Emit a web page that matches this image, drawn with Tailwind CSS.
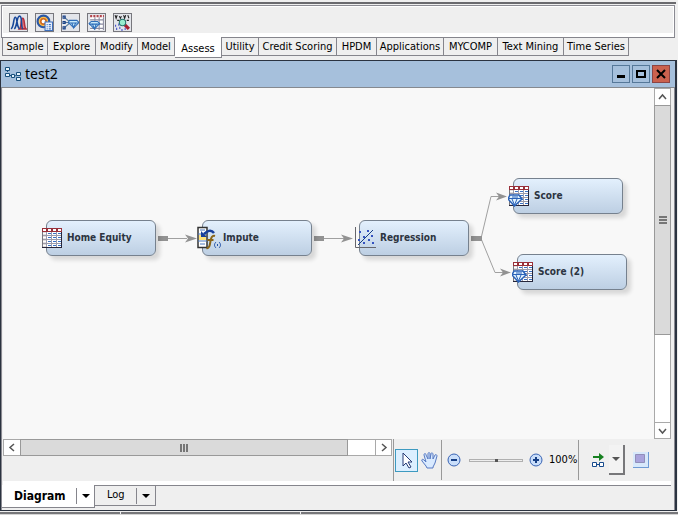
<!DOCTYPE html>
<html lang="en">
<head>
  <meta charset="UTF-8">
  <meta name="viewport" content="width=device-width, initial-scale=1.0">
  <title>test2</title>
  <script src="https://cdn.jsdelivr.net/npm/@tailwindcss/browser@4"></script>
</head>
<body class="flex min-h-screen flex-col bg-[#efefef] font-['DejaVu_Sans_Condensed','DejaVu_Sans',sans-serif] text-xs text-black">

  <!-- shared icons -->
  <svg class="hidden" aria-hidden="true">
    <symbol id="table" viewBox="0 0 22 22">
      <path d="M1 1h20v20H1z" fill="#fff"/>
      <path d="M1 5h5v16H1z" fill="#c4bcbc"/>
      <path d="M1 1h20v4H1z" fill="#98303a"/>
      <path d="M2 3h3M7 3h3M12 3h3M17 3h3" stroke="#fff" stroke-width="2"/>
      <path d="M5.500 5v15M10.500 5v15M15.500 5v15M1 8.500h19M1 12.500h19M1 16.500h19" stroke="#9c9cab"/>
      <path d="M2 6.500h3M2 10.500h3M2 14.500h3M2 18.500h3" stroke="#fff" stroke-width="2"/>
      <path d="M7 6.500h3M12 6.500h3M17 6.500h3M7 10.500h3M12 10.500h3M17 10.500h3M7 14.500h3M12 14.500h3M17 14.500h3M7 18.500h3M12 18.500h3M17 18.500h3" stroke="#3a72c4"/>
      <path d="M1.500 5v16" stroke="#77777d"/>
      <path d="M1 20.500h20M20.500 5v16" stroke="#25253a"/>
    </symbol>
    <symbol id="score" viewBox="0 0 22 22">
      <use href="#table" width="22" height="22"/>
      <path d="M2 10h9l3 4-7.500 7L0 14z" fill="#e4f4ff" stroke="#2a62b8" stroke-width="1.500"/>
      <path d="M1 13.500h12M4 14l2.500 6L9 14M4 12h6" stroke="#2a62b8" fill="none"/>
    </symbol>
  </svg>

  <!-- component toolbar -->
  <header class="pr-[2px]">
    <div class="mt-[2px] h-[2px] bg-[#6a6a6e]"></div>
    <div class="mx-px mt-px flex h-8 gap-[7px] border border-b-0 border-[#8a8a92] pt-[7px] pl-[7px] shadow-[inset_1px_1px_0_#fff,inset_-1px_-4px_0_#fff]">
      <button aria-label="Model comparison" class="size-[19px] border border-[#77777d] bg-[#e3e5ea]">
        <svg viewBox="0 0 16 16" class="size-[17px]" fill="none" stroke-width="1.500"><path d="M9 14c2-2 1-10 3-10s1 8 3 10z" fill="#e77" stroke="#b03040"/><path d="M1 14C4 12 3 3 5 3s1 9 4 11M4 14C7 12 6 2 9 2s1 10 3 12" stroke="#17479a"/></svg>
      </button>
      <button aria-label="Cutoff" class="size-[19px] border border-[#77777d] bg-[#e3e5ea]">
        <svg viewBox="0 0 16 16" class="size-[17px]"><circle cx="7" cy="7" r="5.500" fill="#ffc14a" stroke="#2b58a4" stroke-width="2"/><circle cx="7" cy="7" r="2.500" fill="#fff" stroke="#d26a20" stroke-width="1.500"/><path d="M8.500 7.500h7v8h-7z" fill="#eef5ff" stroke="#3e70bd"/><path d="M10 10h1m1 0h2m-4 2h1m1 0h2m-4 2h1m1 0h2" stroke="#3e70bd"/></svg>
      </button>
      <button aria-label="Decisions" class="size-[19px] border border-[#77777d] bg-[#e3e5ea]">
        <svg viewBox="0 0 16 16" class="size-[17px]" fill="none"><path d="M2 3l6 5-6 5M2 8h7" stroke="#58789c"/><path d="M1 2h2v2H1zM1 7h2v2H1zM1 12h2v2H1z" stroke="#173f86"/><path d="M7 6h7l2 2-5 5-5-5z" fill="#c8e9fa" stroke="#2f6eb8"/><path d="M6 8.500h9M9 8l2 5 2-5" stroke="#2f6eb8"/></svg>
      </button>
      <button aria-label="Score" class="size-[19px] border border-[#77777d] bg-[#e3e5ea]">
        <svg viewBox="0 0 16 16" class="size-[17px]" fill="none"><path d="M2 1h13v14H2z" fill="#fff"/><path d="M2 2h13" stroke="#b0444c" stroke-width="2" stroke-dasharray="2 1"/><path d="M2 5.500h13M2 9.500h13M2 13.500h13M6.500 3v12M10.500 3v12M14.500 3v12" stroke="#8c8ca0"/><path d="M3 7h6l2 2-5 5-5-5z" fill="#c8e9fa" stroke="#2f6eb8"/><path d="M1 9.500h10M4 9l2 5 2-5" stroke="#2f6eb8"/></svg>
      </button>
      <button aria-label="Segment profile" class="size-[19px] border border-[#77777d] bg-[#e3e5ea]">
        <svg viewBox="0 0 16 16" class="size-[17px]" fill="none"><path d="M1 1l1 3 1-3M5 2l1 2 1-2M9 1l1 3 1-3M13 1l1 3M3 6h2M12 6h2" stroke="#222"/><path d="M1 11h1m2-1h1m-3 4h1m2-1h1m1 2h1m2-1h1" stroke="#4350c8" stroke-width="2"/><path d="M10 10l4 4" stroke="#a51f30" stroke-width="3"/><circle cx="8" cy="8" r="3" fill="#97edce" stroke="#28736c"/></svg>
      </button>
    </div>
    <nav class="mx-px flex h-[23px] items-start border-t border-[#85858c] pl-[2px] text-[11px] *:h-[18px] *:border-r *:border-b *:border-[#85858c] *:text-center *:leading-[17px] *:whitespace-nowrap">
      <a href="#" class="w-[45px] shadow-[-1px_0_0_#85858c]">Sample</a>
      <a href="#" class="w-12">Explore</a>
      <a href="#" class="w-[42px]">Modify</a>
      <a href="#" class="w-[37px]">Model</a>
      <a href="#" class="z-10 -mt-px h-[21px]! w-[47px] bg-white leading-6!">Assess</a>
      <a href="#" class="w-[37px]">Utility</a>
      <a href="#" class="w-[78px]">Credit Scoring</a>
      <a href="#" class="w-10">HPDM</a>
      <a href="#" class="w-[67px]">Applications</a>
      <a href="#" class="w-[54px]">MYCOMP</a>
      <a href="#" class="w-[66px]">Text Mining</a>
      <a href="#" class="w-[65px]">Time Series</a>
    </nav>
  </header>

  <!-- diagram window -->
  <main class="mr-px flex flex-1 flex-col border border-r-2 border-[#2b3340]">
    <div class="flex h-[27px] items-center gap-1 border-b border-[#85898f] bg-[#a6c0dc] pr-[5px] pl-1">
      <svg viewBox="0 0 16 16" class="size-4" fill="none" stroke="#174f7c"><path d="M2.500 5v3M5 9.500h3M10 9l2 3" stroke-dasharray="1 1"/><path d="M.5 1.500h4v3h-4zM.5 7.500h4v3h-4zM6.500 8.500h3v3h-3zM11.500 6.500h4v3h-4zM11.500 11.500h4v3h-4z" fill="#e5f2fb"/></svg>
      <h1 class="flex-1 font-['Noto_Sans',sans-serif] text-sm">test2</h1>
      <div class="flex gap-[2px]">
        <button aria-label="Minimize" class="size-[18px] border border-[#567899]"><svg viewBox="0 0 16 16" class="size-4"><path d="M4 9h8v3H4z"/></svg></button>
        <button aria-label="Maximize" class="size-[18px] border border-[#567899]"><svg viewBox="0 0 16 16" class="size-4"><path d="M4 5h8v6H4z" fill="none" stroke="#000" stroke-width="2"/></svg></button>
        <button aria-label="Close" class="size-[18px] border border-[#8c4444] bg-[#cb614e]"><svg viewBox="0 0 16 16" class="size-4"><path d="M4 4l8 8M12 4l-8 8" stroke="#000" stroke-width="2"/></svg></button>
      </div>
    </div>

    <div class="flex flex-1 flex-col border-r border-l border-[#8a8a92] pr-[3px] pl-px">
      <div class="flex flex-1">
        <!-- free canvas -->
        <section class="relative min-h-[351px] flex-1 overflow-hidden bg-[#f8f8f8] text-[10px] font-bold text-[#2c3440]">
          <svg viewBox="3 88 648 351" width="648" height="351" class="absolute top-0 left-0" fill="#929292" stroke="#a0a0a0">
            <path d="M168 238.500h19M324 238.500h20M481 238.500l10-42h8M481 238.500l14 34h8" fill="none"/>
            <path d="M158 236h10v5h-10zM314 236h10v5h-10zM471 236h11v5h-11z" stroke="none"/>
            <path d="M185 234.500l12 4-12 4 3-4zM341 234.500l12 4-12 4 3-4zM496 192.500l11 4-11 4 3-4zM500 268.500l11 4-11 4 3-4z" stroke="none"/>
          </svg>
          <div class="absolute top-[132px] left-[43px] flex h-9 w-[110px] items-center rounded-md border border-[#76818e] bg-linear-to-b from-[#e3f0fd] to-[#bdcfe3] shadow-[4px_4px_4px_#0002]">
            <svg class="-ml-[6px] size-[22px]"><use href="#table"/></svg><span class="ml-1">Home Equity</span>
          </div>
          <div class="absolute top-[132px] left-[199px] flex h-9 w-[110px] items-center rounded-md border border-[#76818e] bg-linear-to-b from-[#e3f0fd] to-[#bdcfe3] shadow-[4px_4px_4px_#0002]">
            <svg viewBox="0 0 24 24" class="-ml-[6px] size-6" fill="none"><path d="M1 1.500h9v20H1z" fill="#fff" stroke="#333" stroke-width="1.500"/><path d="M2 9h7v5H2z" fill="#ffe37b"/><path d="M1 8h9M1 15h9M3 4h5M3 18h5" stroke="#4a79bf"/><path d="M17 7C14 3 10 5 7 8" stroke="#173f9c" stroke-width="2.500"/><path d="M4 5v6h6z" fill="#173f9c"/><path d="M18 10c-3-1-4 2-4.500 5s-1 8-4 7M10.500 14h6" stroke="#8a6518" stroke-width="2"/><path d="M19 16c-2 2-2 4 0 6M22 16c2 2 2 4 0 6M20.500 18v2" stroke="#2452a8"/></svg>
            <span class="ml-[2px]">Impute</span>
          </div>
          <div class="absolute top-[132px] left-[356px] flex h-9 w-[110px] items-center rounded-md border border-[#76818e] bg-linear-to-b from-[#e3f0fd] to-[#bdcfe3] shadow-[4px_4px_4px_#0002]">
            <svg viewBox="0 0 22 22" class="-ml-[6px] size-[22px]" fill="none"><path d="M1.500 0v20.500H22" stroke="#66666c"/><path d="M4 18L19 3" stroke="#173f86"/><path d="M5 4h2v2H5zM13 3h2v2h-2zM4 12h2v2H4zM9 9h2v2H9zM17 8h2v2h-2zM14 12h2v2h-2zM9 15h2v2H9zM18 15h2v2h-2z" fill="#3452c0"/></svg>
            <span class="ml-1">Regression</span>
          </div>
          <div class="absolute top-[90px] left-[510px] flex h-9 w-[110px] items-center rounded-md border border-[#76818e] bg-linear-to-b from-[#e3f0fd] to-[#bdcfe3] shadow-[4px_4px_4px_#0002]">
            <svg class="-ml-[6px] size-[22px]"><use href="#score"/></svg><span class="ml-1">Score</span>
          </div>
          <div class="absolute top-[166px] left-[514px] flex h-9 w-[110px] items-center rounded-md border border-[#76818e] bg-linear-to-b from-[#e3f0fd] to-[#bdcfe3] shadow-[4px_4px_4px_#0002]">
            <svg class="-ml-[6px] size-[22px]"><use href="#score"/></svg><span class="ml-1">Score (2)</span>
          </div>
        </section>

        <!-- vertical scrollbar -->
        <div class="flex w-[17px] flex-col border border-[#a9a9a9] bg-white">
          <button aria-label="Scroll up" class="h-4"><svg viewBox="0 0 15 16" class="h-4 w-[15px]"><path d="M4 10l3.500-4 3.500 4" fill="none" stroke="#555" stroke-width="1.500"/></svg></button>
          <div class="-mx-px flex basis-[230px] items-center justify-center border border-[#999] bg-[#dadada]"><svg viewBox="0 0 8 8" class="size-2"><path d="M0 1h8M0 4h8M0 7h8" stroke="#555" stroke-width="1.500"/></svg></div>
          <div class="flex-1"></div>
          <button aria-label="Scroll down" class="h-4 border-t border-[#a9a9a9]"><svg viewBox="0 0 15 16" class="h-4 w-[15px]"><path d="M4 6l3.500 4 3.500-4" fill="none" stroke="#555" stroke-width="1.500"/></svg></button>
        </div>
      </div>

      <!-- horizontal scrollbar and zoom tools -->
      <div class="flex h-[46px] items-start border-b-4 border-white">
        <div class="flex h-[17px] flex-1 border border-[#a9a9a9] bg-white">
          <button aria-label="Scroll left" class="w-4"><svg viewBox="0 0 16 15" class="h-[15px] w-4"><path d="M10 4L6 7.500l4 3.500" fill="none" stroke="#555" stroke-width="1.500"/></svg></button>
          <div class="-my-px flex w-[328px] items-center justify-center border border-[#999] bg-[#dadada]"><svg viewBox="0 0 8 8" class="size-2"><path d="M1 0v8M4 0v8M7 0v8" stroke="#555" stroke-width="1.500"/></svg></div>
          <div class="flex-1"></div>
          <button aria-label="Scroll right" class="w-4 border-l border-[#a9a9a9]"><svg viewBox="0 0 16 15" class="h-[15px] w-4"><path d="M6 4l4 3.500-4 3.500" fill="none" stroke="#555" stroke-width="1.500"/></svg></button>
        </div>
        <div class="ml-px flex h-[42px] w-[278px] items-center border-l border-[#999]">
          <button aria-label="Select" class="ml-px h-[23px] w-[23px] border border-[#3d9ac0] bg-[#dcefff]"><svg viewBox="0 0 21 21" class="size-[21px]"><path d="M7 3v13l3-3 3 5 2-1-3-5h4z" fill="#fff" stroke="#263b75"/></svg></button>
          <button aria-label="Pan" class="ml-[3px] size-[18px]"><svg viewBox="0 0 18 18" class="size-[18px]"><path d="M5 15L1 10c-1-2 1-2 2-1l2 2-2-7c0-2 2-2 2 0l2 4V3c0-2 2-2 2 0v5l1-5c0-2 2-1 2 0v5l2-4c1-1 2 0 2 1l-2 7-2 4v1H6z" fill="#d9eaff" stroke="#5679c2"/></svg></button>
          <div class="ml-[2px] h-10 border-l border-[#999]"></div>
          <button aria-label="Zoom out" class="ml-[5px] size-[14px]"><svg viewBox="0 0 14 14" class="size-[14px]"><circle cx="7" cy="7" r="6" fill="#c9defa" stroke="#3863b4"/><path d="M4 7h6" stroke="#173f86" stroke-width="2"/></svg></button>
          <input type="range" value="50" aria-label="Zoom" class="ml-2 h-[3px] w-[54px] appearance-none border border-[#b0b0b0] bg-[#eee] [&::-webkit-slider-thumb]:size-[3px] [&::-webkit-slider-thumb]:appearance-none [&::-webkit-slider-thumb]:bg-[#555]">
          <button aria-label="Zoom in" class="ml-[6px] size-[14px]"><svg viewBox="0 0 14 14" class="size-[14px]"><circle cx="7" cy="7" r="6" fill="#c9defa" stroke="#3863b4"/><path d="M4 7h6M7 4v6" stroke="#173f86" stroke-width="2"/></svg></button>
          <span class="ml-[6px] w-[29px] text-[11px]">100%</span>
          <div class="h-10 border-l border-[#999]"></div>
          <button aria-label="Layout" class="ml-3 size-[14px]"><svg viewBox="0 0 14 14" class="size-[14px]"><path d="M2 3h6V0l5 4-5 4V5H2z" fill="#168020"/><path d="M1.500 9.500h4v4h-4zM8.500 9.500h4v4h-4zM5.500 11.500h3" fill="#fff" stroke="#174a8c"/></svg></button>
          <button aria-label="Layout options" class="ml-1 h-[30px] w-4 border-r-2 border-b-2 border-[#77777a] bg-[#f3f3f3]"><svg viewBox="0 0 14 28" class="h-7 w-[14px]"><path d="M3 12h8l-4 4z" fill="#555"/></svg></button>
          <button aria-label="Overview" class="ml-2 size-4"><svg viewBox="0 0 16 16" class="size-4"><path d="M0 0h16v16H0z" fill="#6f9bd4"/><path d="M0 0h15v15H0z" fill="#d8e9fb"/><path d="M2.500 2.500h9v8h-9z" fill="#a9a3dc" stroke="#918fba"/></svg></button>
        </div>
      </div>

      <!-- view tabs -->
      <div class="flex h-[25px] items-start border-t border-[#85858c] text-[11px]">
        <div class="-mt-px -ml-px flex h-[23px] w-[93px] items-center border-r border-b border-[#85858c] bg-white">
          <a href="#" class="flex-1 pl-3 text-xs font-bold">Diagram</a>
          <button aria-label="Diagram views" class="flex h-4 w-[18px] items-center justify-center border-l border-[#85858c]"><svg viewBox="0 0 8 4" class="h-1 w-2"><path d="M0 0h8L4 4z"/></svg></button>
        </div>
        <div class="flex h-[20px] w-[61px] items-center border-r border-b border-[#85858c]">
          <a href="#" class="flex-1 pl-3">Log</a>
          <button aria-label="Log views" class="flex h-4 w-[19px] items-center justify-center border-l border-[#85858c]"><svg viewBox="0 0 8 4" class="h-1 w-2"><path d="M0 0h8L4 4z"/></svg></button>
        </div>
      </div>
    </div>
  </main>

  <footer class="mt-px flex h-[3px] gap-px border-b border-[#d5d5d5] *:bg-[#77777a]">
    <div class="w-[120px]"></div><div class="w-[179px]"></div><div class="flex-1"></div>
  </footer>
</body>
</html>
